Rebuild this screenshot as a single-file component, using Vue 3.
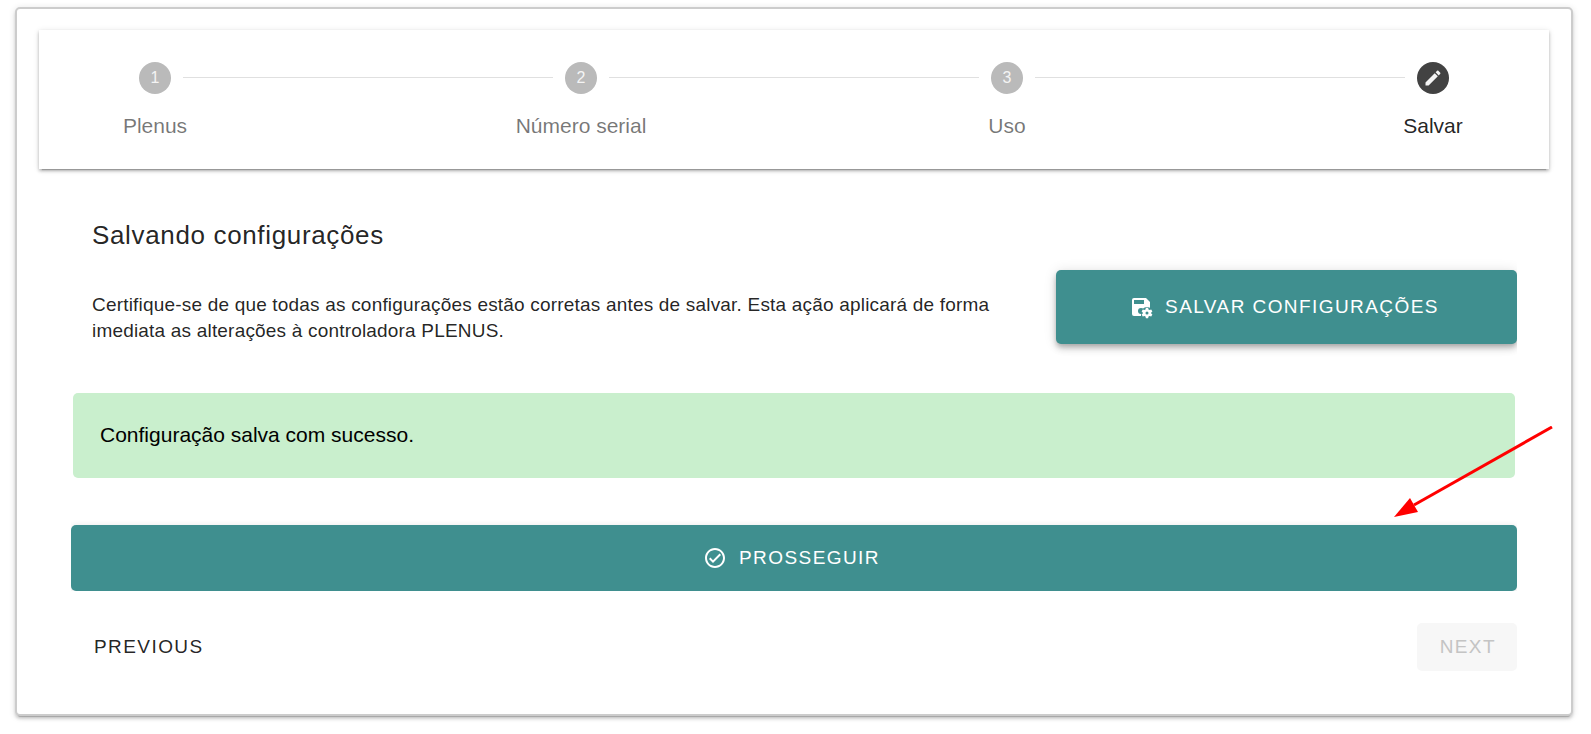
<script setup>
import {ref} from 'vue'

const steps = ['Plenus', 'Número serial', 'Uso', 'Salvar']
const currentStep = ref(4)
const saved = ref(true)

const save = () => {
    saved.value = true
}
const previous = () => {
    if (currentStep.value > 1) currentStep.value--
}
</script>

<template>
    <main class="card">
        <header class="stepper">
            <template v-for="(name, index) in steps" :key="name">
                <hr v-if="index > 0" class="divider">
                <div class="step" :class="{active: currentStep === index + 1}">
                    <span class="step-circle">
                        <svg v-if="currentStep === index + 1" class="pencil" viewBox="0 0 24 24">
                            <path d="M20.71 7.04c.39-.39.39-1.04 0-1.41l-2.34-2.34c-.37-.39-1.02-.39-1.41 0l-1.84 1.83 3.75 3.75M3 17.25V21h3.75L17.81 9.93l-3.75-3.75L3 17.25z"/>
                        </svg>
                        <template v-else>{{index + 1}}</template>
                    </span>
                    <span class="step-label">{{name}}</span>
                </div>
            </template>
        </header>

        <section class="content">
            <h1>Salvando configurações</h1>

            <div class="save-row">
                <p>
                    Certifique-se de que todas as configurações estão corretas antes de salvar. Esta ação aplicará de forma imediata as alterações à controladora PLENUS.
                </p>
                <div class="save-col">
                    <button type="button" class="btn btn-primary btn-save" @click="save">
                        <svg class="icon" viewBox="0 0 24 24">
                            <path d="M5 3h12l4 4v12a2 2 0 0 1-2 2H5a2 2 0 0 1-2-2V5a2 2 0 0 1 2-2z"/>
                            <path class="hole" d="M5 5h10v4H5z"/>
                            <circle class="hole" cx="12" cy="16" r="3"/>
                            <circle class="hole" cx="18" cy="18" r="6"/>
                            <path class="hole" d="M12 18h12v6H12z"/>
                            <path fill-rule="evenodd" d="M16.9 12.8h2.2l.4 1.6 1.1.6 1.6-.5 1.2 2-1.2 1.1v.8l1.2 1.1-1.2 2-1.6-.5-1.1.6-.4 1.6h-2.2l-.4-1.6-1.1-.6-1.6.5-1.2-2 1.2-1.1v-.8l-1.2-1.1 1.2-2 1.6.5 1.1-.6zM18 16.500a1.500 1.500 0 1 0 0 3 1.500 1.500 0 0 0 0-3z"/>
                        </svg>
                        SALVAR CONFIGURAÇÕES
                    </button>
                </div>
            </div>

            <div v-if="saved" class="alert" role="status">Configuração salva com sucesso.</div>

            <button type="button" class="btn btn-primary btn-proceed">
                <svg class="icon" viewBox="0 0 24 24">
                    <path d="M12 2C6.5 2 2 6.5 2 12s4.5 10 10 10 10-4.5 10-10S17.5 2 12 2m0 18c-4.41 0-8-3.59-8-8s3.59-8 8-8 8 3.59 8 8-3.59 8-8 8m4.59-12.42L10 14.17l-2.59-2.58L6 13l4 4 8-8-1.41-1.42z"/>
                </svg>
                PROSSEGUIR
            </button>
        </section>

        <footer class="nav">
            <button type="button" class="btn" @click="previous">PREVIOUS</button>
            <button type="button" class="btn" disabled>NEXT</button>
        </footer>

        <svg class="arrow" viewBox="0 0 160 92">
            <path d="M158 1L20 79" stroke="#f00" stroke-width="3"/>
            <path d="M0 91l16-19 8 14z" fill="#f00"/>
        </svg>
    </main>
</template>

<style>
body {
    margin: 0;
    background: #fff;
}
</style>

<style scoped>
* {box-sizing: border-box}

.card {
    position: relative;
    margin: 7px 18px 18px 15px;
    padding: 21px 22px 43px;
    border: 2px solid #ccc;
    border-radius: 5px;
    background: #fff;
    color: rgba(0, 0, 0, .87);
    font-family: "Liberation Sans", Arial, sans-serif;
    box-shadow: 0 4px 1px -3px rgba(0, 0, 0, .2), 0 3px 3px 0 rgba(0, 0, 0, .14), 0 1px 7px 0 rgba(0, 0, 0, .12);
}

.stepper {
    display: flex;
    background: #fff;
    box-shadow: 0 4px 1px -3px rgba(0, 0, 0, .2), 0 2px 3px 0 rgba(0, 0, 0, .24), 0 1px 6px 0 rgba(0, 0, 0, .12);
}

.step {
    flex: 0 0 232px;
    display: flex;
    flex-direction: column;
    align-items: center;
    gap: 21px;
    padding: 32px 0 33px;
    color: rgba(0, 0, 0, .54);
}
.step.active {color: rgba(0, 0, 0, .87)}

.step-circle {
    display: flex;
    align-items: center;
    justify-content: center;
    width: 32px;
    height: 32px;
    border-radius: 50%;
    background: #bababa;
    color: #f4f4f4;
    font-size: 16px;
    line-height: 16px;
}
.active .step-circle {background: #424242}

.pencil {
    width: 20px;
    height: 20px;
    fill: currentColor;
}

.step-label {
    font-size: 21px;
    line-height: 21px;
}

.divider {
    flex: 1;
    height: 1px;
    margin: 47px -88px 0;
    border: 0;
    background: #e0e0e0;
}

.content {
    margin: 0 32px;
    padding-top: 50px;
    overflow: hidden;
}

h1 {
    margin: 0 21px 19px;
    font-size: 26px;
    font-weight: 400;
    line-height: 32px;
    letter-spacing: .025em;
}

.save-row {
    display: grid;
    grid-template-columns: 2fr 1fr;
    align-items: end;
}
.save-row p {
    margin: 0;
    padding: 0 21px;
    font-size: 19px;
    line-height: 26px;
    letter-spacing: .01em;
}
.save-col {padding-left: 21px}

.btn {
    display: inline-flex;
    align-items: center;
    justify-content: center;
    height: 48px;
    padding: 0 21px 0 23px;
    border: 0;
    border-radius: 5px;
    background: transparent;
    color: inherit;
    font-family: inherit;
    font-size: 19px;
    letter-spacing: .075em;
    cursor: pointer;
}
.btn:disabled {
    background: #f7f7f7;
    color: #c4c4c4;
    cursor: default;
}
.btn-primary {
    width: 100%;
    padding: 0 22px;
    background: #3f8f8f;
    color: #fff;
}
.btn-save {
    height: 74px;
    box-shadow: 0 3px 5px -1px rgba(0, 0, 0, .2), 0 5px 7px 0 rgba(0, 0, 0, .14), 0 1px 13px 0 rgba(0, 0, 0, .12);
}
.btn-proceed {
    height: 66px;
    box-shadow: 0 1px 7px 0 rgba(0, 0, 0, .12);
}

.icon {
    width: 24px;
    height: 24px;
    margin: 0 12px 0 -5px;
    fill: currentColor;
}
.hole {fill: #3f8f8f}

.alert {
    margin: 49px 2px 47px;
    padding: 25px 27px 27px;
    border-radius: 5px;
    background: #c9efcd;
    color: #000;
    font-size: 21px;
    line-height: 33px;
}

.nav {
    display: flex;
    justify-content: space-between;
    margin: 32px 32px 0;
}

.arrow {
    position: absolute;
    top: 417px;
    right: 17px;
    width: 160px;
    height: 92px;
    pointer-events: none;
}
</style>
